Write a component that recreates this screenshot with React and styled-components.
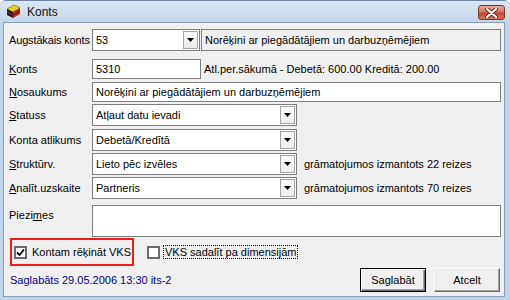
import React from 'react';
import styled, { createGlobalStyle } from 'styled-components';

const GlobalStyle = createGlobalStyle`
  html, body {
    margin: 0;
    padding: 0;
    background: #ffffff;
  }
  body {
    font-family: "Liberation Sans", Arial, sans-serif;
    font-size: 11px;
    color: #000;
  }
`;

const KontsIcon = () => (
  <svg width="15" height="15" viewBox="0 0 15 15">
    <polygon points="1,5 8,1 14,4 7,8" fill="#f4e01a" stroke="#5a4a00" strokeWidth="0.6" />
    <polygon points="1,5 7,8 7,14 1,11" fill="#1a1a1a" />
    <polygon points="7,8 14,4 14,10 7,14" fill="#c8201a" />
    <line x1="1" y1="8" x2="7" y2="11" stroke="#c8201a" strokeWidth="1" />
    <line x1="7" y1="11" x2="14" y2="7" stroke="#1a1a1a" strokeWidth="1" />
    <circle cx="6" cy="4" r="0.6" fill="#8a7a00" />
    <circle cx="9" cy="4" r="0.6" fill="#8a7a00" />
    <circle cx="8" cy="6" r="0.6" fill="#8a7a00" />
  </svg>
);

const CloseGlyph = () => (
  <svg width="13" height="10" viewBox="0 0 13 10">
    <path d="M2 1 L11 9 M11 1 L2 9" stroke="#6b2418" strokeWidth="4" strokeLinecap="round" />
    <path d="M2 1 L11 9 M11 1 L2 9" stroke="#ffffff" strokeWidth="2.2" strokeLinecap="round" />
  </svg>
);

const CheckMark = () => (
  <svg width="9" height="9" viewBox="0 0 9 9">
    <path d="M1 4.5 L3.5 7 L8 1.5" fill="none" stroke="#000" strokeWidth="1.8" />
  </svg>
);

const Arrow = () => (
  <svg width="7" height="4" viewBox="0 0 7 4">
    <polygon points="0,0 7,0 3.5,4" fill="#000" />
  </svg>
);

const Window = styled.div`
  width: 510px;
  height: 300px;
  box-sizing: border-box;
  display: flex;
  flex-direction: column;
  background: #c0d4eb;
  border-top: 1px solid #6f84a3;
  border-radius: 6px 6px 0 0;
  overflow: hidden;
`;

const TitleBar = styled.div`
  height: 21px;
  display: flex;
  align-items: center;
  padding: 0 5px 0 6px;
  background: linear-gradient(#dce7f4, #c5d6ea);
`;

const Title = styled.span`
  margin-left: 6px;
  font-size: 12px;
  color: #111;
  flex: 1;
`;

const CloseButton = styled.div`
  width: 25px;
  height: 13px;
  margin-top: 2px;
  display: flex;
  align-items: center;
  justify-content: center;
  border: 1px solid #7a3326;
  border-radius: 3px;
  background: linear-gradient(#e6a99a, #d4735f 45%, #c2452b 55%, #d7775d);
`;

const Client = styled.div`
  flex: 1;
  margin: 0 5px 3px 3px;
  border: 1px solid #8c9fb9;
  background: #f0f0f0;
  padding: 6px 3px 0 5px;
  display: flex;
  flex-direction: column;
`;

const Row = styled.div`
  display: flex;
  align-items: ${p => (p.$top ? 'flex-start' : 'center')};
  height: ${p => p.$h}px;
  margin-top: ${p => p.$mt || 0}px;
`;

const Label = styled.div`
  width: 83px;
  flex: none;
  white-space: nowrap;
  letter-spacing: ${p => (p.$tight ? '-0.15px' : 'normal')};
  padding-top: ${p => (p.$top ? 4 : 0)}px;
  u {
    text-decoration: underline;
  }
`;

const Box = styled.div`
  box-sizing: border-box;
  height: 100%;
  width: ${p => (p.$w ? `${p.$w}px` : 'auto')};
  flex: ${p => (p.$w ? 'none' : 1)};
  margin-left: ${p => p.$ml || 0}px;
  border: 1px solid #7f7f7f;
  background: ${p => (p.$readOnly ? '#f0f0f0' : '#ffffff')};
  display: flex;
  align-items: center;
  padding-left: 3px;
  padding-right: ${p => (p.$combo ? 0 : 3)}px;
  white-space: nowrap;
`;

const BoxText = styled.span`
  flex: 1;
`;

const DropButton = styled.div`
  box-sizing: border-box;
  width: 15px;
  height: calc(100% - 2px);
  margin-right: 1px;
  border: 1px solid #a5a5a5;
  background: linear-gradient(#fafafa, #ececec);
  display: flex;
  align-items: center;
  justify-content: center;
`;

const Note = styled.span`
  margin-left: ${p => p.$ml}px;
  white-space: nowrap;
`;

const CheckRow = styled.div`
  display: flex;
  align-items: center;
  height: 28px;
  margin-top: 1px;
`;

const Highlight = styled.div`
  box-sizing: border-box;
  height: 100%;
  width: 124px;
  margin-left: 1px;
  border: 2px solid #ee1c1c;
  display: flex;
  align-items: center;
  padding-left: 2px;
`;

const CheckField = styled.label`
  display: flex;
  align-items: center;
  margin-left: ${p => p.$ml || 0}px;
  white-space: nowrap;
`;

const CheckBox = styled.span`
  box-sizing: border-box;
  width: 13px;
  height: 13px;
  border: 2px solid #6a6a6a;
  background: #fff;
  display: flex;
  align-items: center;
  justify-content: center;
`;

const CheckText = styled.span`
  margin-left: 3px;
  padding: 0 1px;
  line-height: 12px;
  border: 1px ${p => (p.$focus ? 'dotted #000' : 'solid transparent')};
`;

const Footer = styled.div`
  display: flex;
  align-items: center;
  height: 24px;
  margin-top: 2px;
  padding-right: 1px;
`;

const SavedInfo = styled.span`
  flex: 1;
  color: #00007f;
  padding-left: 1px;
`;

const Button = styled.div`
  box-sizing: border-box;
  width: 66px;
  height: 24px;
  margin-left: ${p => p.$ml || 0}px;
  display: flex;
  align-items: center;
  justify-content: center;
  background: #f0f0f0;
  border: 1px solid;
  border-color: ${p => (p.$default ? '#000' : '#ffffff #6a6a6a #6a6a6a #ffffff')};
  box-shadow: ${p =>
    p.$default
      ? 'inset 1px 1px #ffffff, inset -1px -1px #6a6a6a, inset -2px -2px #a0a0a0'
      : 'inset -1px -1px #a0a0a0, inset 1px 1px #e3e3e3'};
`;

const Combo = ({ w, text }) => (
  <Box $w={w} $combo>
    <BoxText>{text}</BoxText>
    <DropButton>
      <Arrow />
    </DropButton>
  </Box>
);

export default function App() {
  return (
    <>
      <GlobalStyle />
      <Window>
        <TitleBar>
          <KontsIcon />
          <Title>Konts</Title>
          <CloseButton>
            <CloseGlyph />
          </CloseButton>
        </TitleBar>
        <Client>
          <Row $h={22}>
            <Label $tight>Augstākais konts</Label>
            <Combo w={108} text="53" />
            <Box $readOnly $ml={1}>Norēķini ar piegādātājiem un darbuzņēmējiem</Box>
          </Row>
          <Row $h={20} $mt={8}>
            <Label><u>K</u>onts</Label>
            <Box $w={109}>5310</Box>
            <Note $ml={3}>Atl.per.sākumā - Debetā: 600.00 Kreditā: 200.00</Note>
          </Row>
          <Row $h={20} $mt={3}>
            <Label><u>N</u>osaukums</Label>
            <Box>Norēķini ar piegādātājiem un darbuzņēmējiem</Box>
          </Row>
          <Row $h={22} $mt={2}>
            <Label><u>S</u>tatuss</Label>
            <Combo w={205} text="Atļaut datu ievadi" />
          </Row>
          <Row $h={22} $mt={3}>
            <Label>Konta atlikums</Label>
            <Combo w={205} text="Debetā/Kredītā" />
          </Row>
          <Row $h={22} $mt={2}>
            <Label><u>S</u>truktūrv.</Label>
            <Combo w={205} text="Lieto pēc izvēles" />
            <Note $ml={7}>grāmatojumos izmantots 22 reizes</Note>
          </Row>
          <Row $h={22} $mt={2}>
            <Label><u>A</u>nalīt.uzskaite</Label>
            <Combo w={205} text="Partneris" />
            <Note $ml={7}>grāmatojumos izmantots 70 reizes</Note>
          </Row>
          <Row $h={32} $mt={6} $top>
            <Label $top>Piezi<u>m</u>es</Label>
            <Box />
          </Row>
          <CheckRow>
            <Highlight>
              <CheckField>
                <CheckBox>
                  <CheckMark />
                </CheckBox>
                <CheckText>Kontam rēķināt VKS</CheckText>
              </CheckField>
            </Highlight>
            <CheckField $ml={13}>
              <CheckBox />
              <CheckText $focus>VKS sadalīt pa dimensijām</CheckText>
            </CheckField>
          </CheckRow>
          <Footer>
            <SavedInfo>Saglabāts 29.05.2006 13:30 its-2</SavedInfo>
            <Button $default>Saglabāt</Button>
            <Button $ml={8}>Atcelt</Button>
          </Footer>
        </Client>
      </Window>
    </>
  );
}
